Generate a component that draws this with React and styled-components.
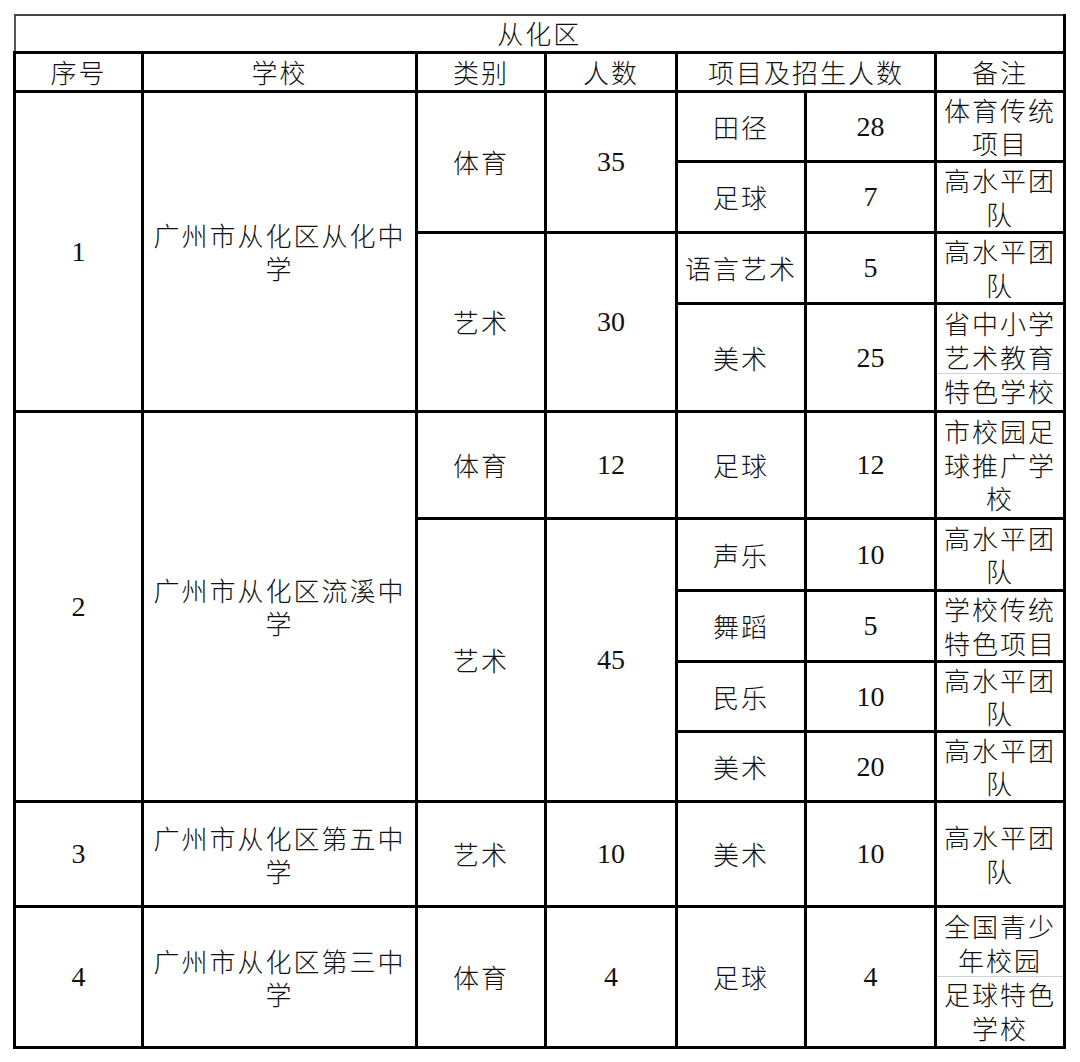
import React from "react"
import styled, { createGlobalStyle } from "styled-components"

const GlobalStyle = createGlobalStyle`
  html, body {
    margin: 0;
    padding: 0;
    background: #fff;
  }
  body {
    font-family: "Noto Sans CJK SC", "Noto Sans", sans-serif;
    color: #000;
  }
`

const Page = styled.div`
  padding: 14px 0 0 13px;
  width: 1080px;
  box-sizing: border-box;
`

const Table = styled.table`
  border-collapse: collapse;
  table-layout: fixed;
  width: 1051px;
  border-left: 2px solid #555;
  border-top: 2px solid #444;
  border-right: 3px solid #000;
  border-bottom: 3px solid #000;
`

const Row = styled.tr`
  height: ${p => p.$h}px;
`

const Cell = styled.td`
  border: 3px solid #000;
  padding: 0 6px;
  text-align: center;
  vertical-align: middle;
  font-family: ${p =>
    p.$num
      ? '"Liberation Serif", "Times New Roman", serif'
      : '"Noto Sans CJK SC", "Noto Sans", sans-serif'};
  font-size: ${p => (p.$num ? 28 : 26)}px;
  letter-spacing: ${p => (p.$num ? 0 : 2)}px;
  line-height: 33px;
  font-weight: 300;
  color: #111;
`

const TitleCell = styled(Cell)`
  border-left: 2px solid #555;
  border-top: 2px solid #444;
  line-height: 32px;
`

const HeadCell = styled(Cell)`
  line-height: 32px;
`

const NoteCell = styled(Cell)`
  padding: 0;
  line-height: 33.5px;
`

const NoteBlock = styled.div`
  padding: 0 4px;
  border-bottom: ${p => (p.$split ? "1px solid #c9d1e3" : "none")};
`

const widths = [128, 274, 129, 131, 129, 130, 129]

const Note = ({ parts }) => (
  <NoteCell>
    {parts.map((t, i) => (
      <NoteBlock key={i} $split={i < parts.length - 1}>
        {t}
      </NoteBlock>
    ))}
  </NoteCell>
)

export default function App() {
  return (
    <Page>
      <GlobalStyle />
      <Table>
        <colgroup>
          {widths.map((w, i) => (
            <col key={i} style={{ width: w }} />
          ))}
        </colgroup>
        <tbody>
          <Row $h={37}>
            <TitleCell colSpan={7}>从化区</TitleCell>
          </Row>
          <Row $h={39}>
            <HeadCell>序号</HeadCell>
            <HeadCell>学校</HeadCell>
            <HeadCell>类别</HeadCell>
            <HeadCell>人数</HeadCell>
            <HeadCell colSpan={2}>项目及招生人数</HeadCell>
            <HeadCell>备注</HeadCell>
          </Row>

          <Row $h={70}>
            <Cell $num rowSpan={4}>1</Cell>
            <Cell rowSpan={4}>广州市从化区从化中学</Cell>
            <Cell rowSpan={2}>体育</Cell>
            <Cell $num rowSpan={2}>35</Cell>
            <Cell>田径</Cell>
            <Cell $num>28</Cell>
            <Note parts={["体育传统项目"]} />
          </Row>
          <Row $h={71}>
            <Cell>足球</Cell>
            <Cell $num>7</Cell>
            <Note parts={["高水平团队"]} />
          </Row>
          <Row $h={71}>
            <Cell rowSpan={2}>艺术</Cell>
            <Cell $num rowSpan={2}>30</Cell>
            <Cell>语言艺术</Cell>
            <Cell $num>5</Cell>
            <Note parts={["高水平团队"]} />
          </Row>
          <Row $h={108}>
            <Cell>美术</Cell>
            <Cell $num>25</Cell>
            <Note parts={["省中小学艺术教育", "特色学校"]} />
          </Row>

          <Row $h={107}>
            <Cell $num rowSpan={5}>2</Cell>
            <Cell rowSpan={5}>广州市从化区流溪中学</Cell>
            <Cell>体育</Cell>
            <Cell $num>12</Cell>
            <Cell>足球</Cell>
            <Cell $num>12</Cell>
            <Note parts={["市校园足球推广学校"]} />
          </Row>
          <Row $h={72}>
            <Cell rowSpan={4}>艺术</Cell>
            <Cell $num rowSpan={4}>45</Cell>
            <Cell>声乐</Cell>
            <Cell $num>10</Cell>
            <Note parts={["高水平团队"]} />
          </Row>
          <Row $h={71}>
            <Cell>舞蹈</Cell>
            <Cell $num>5</Cell>
            <Note parts={["学校传统特色项目"]} />
          </Row>
          <Row $h={70}>
            <Cell>民乐</Cell>
            <Cell $num>10</Cell>
            <Note parts={["高水平团队"]} />
          </Row>
          <Row $h={70}>
            <Cell>美术</Cell>
            <Cell $num>20</Cell>
            <Note parts={["高水平团队"]} />
          </Row>

          <Row $h={105}>
            <Cell $num>3</Cell>
            <Cell>广州市从化区第五中学</Cell>
            <Cell>艺术</Cell>
            <Cell $num>10</Cell>
            <Cell>美术</Cell>
            <Cell $num>10</Cell>
            <Note parts={["高水平团队"]} />
          </Row>

          <Row $h={141}>
            <Cell $num>4</Cell>
            <Cell>广州市从化区第三中学</Cell>
            <Cell>体育</Cell>
            <Cell $num>4</Cell>
            <Cell>足球</Cell>
            <Cell $num>4</Cell>
            <Note parts={["全国青少年校园", "足球特色学校"]} />
          </Row>
        </tbody>
      </Table>
    </Page>
  )
}
